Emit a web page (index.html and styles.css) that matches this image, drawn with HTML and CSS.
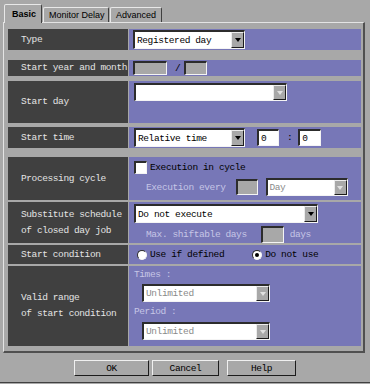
FILE: index.html
```html
<!DOCTYPE html>
<html lang="en">
<head>
  <meta charset="UTF-8" />
  <title>Schedule Definition</title>
  <link rel="stylesheet" href="styles.css">
</head>
<body>
  <div class="window">
    <div class="tabs">
      <div class="tab tab-basic active">Basic</div>
      <div class="tab tab-monitor">Monitor Delay</div>
      <div class="tab tab-advanced">Advanced</div>
    </div>

    <div class="panel">
      <div class="row row-type">
        <div class="label">Type</div>
        <div class="value pad">
          <div class="select w-type">
            <span class="select-text">Registered day</span>
            <span class="select-arrow"></span>
          </div>
        </div>
      </div>

      <div class="row row-year">
        <div class="label">Start year and month</div>
        <div class="value pad">
          <div class="field off w-year"></div>
          <span class="slash">/</span>
          <div class="field off w-month"></div>
        </div>
      </div>

      <div class="row row-day">
        <div class="label">Start day</div>
        <div class="value stack pad-day">
          <div class="select w-day">
            <span class="select-text"></span>
            <span class="select-arrow off"></span>
          </div>
        </div>
      </div>

      <div class="row row-time">
        <div class="label">Start time</div>
        <div class="value pad-day">
          <div class="select w-time">
            <span class="select-text">Relative time</span>
            <span class="select-arrow"></span>
          </div>
          <div class="field w-hour">0</div>
          <span class="colon">:</span>
          <div class="field w-min">0</div>
        </div>
      </div>

      <div class="row row-cycle">
        <div class="label">Processing cycle</div>
        <div class="value stack">
          <div class="line line-check">
            <span class="checkbox"></span>
            <span class="text">Execution in cycle</span>
          </div>
          <div class="line line-sub">
            <span class="text dim">Execution every</span>
            <div class="field off w-every"></div>
            <div class="select off w-unit">
              <span class="select-text">Day</span>
              <span class="select-arrow off"></span>
            </div>
          </div>
        </div>
      </div>

      <div class="row row-subst">
        <div class="label">Substitute schedule<br>of closed day job</div>
        <div class="value stack">
          <div class="select w-subst">
            <span class="select-text">Do not execute</span>
            <span class="select-arrow"></span>
          </div>
          <div class="line line-sub">
            <span class="text dim">Max. shiftable days</span>
            <div class="field off w-shift"></div>
            <span class="text dim days">days</span>
          </div>
        </div>
      </div>

      <div class="row row-cond">
        <div class="label">Start condition</div>
        <div class="value line-radio">
          <span class="radio"></span>
          <span class="text">Use if defined</span>
          <span class="radio checked second"></span>
          <span class="text">Do not use</span>
        </div>
      </div>

      <div class="row row-range">
        <div class="label">Valid range<br>of start condition</div>
        <div class="value stack range">
          <span class="text dim">Times :</span>
          <div class="select off w-range">
            <span class="select-text">Unlimited</span>
            <span class="select-arrow off"></span>
          </div>
          <span class="text dim period">Period :</span>
          <div class="select off w-range last">
            <span class="select-text">Unlimited</span>
            <span class="select-arrow off"></span>
          </div>
        </div>
      </div>
    </div>

    <div class="buttons">
      <button class="btn btn-ok">OK</button>
      <button class="btn btn-cancel">Cancel</button>
      <button class="btn btn-help">Help</button>
    </div>
  </div>
</body>
</html>
```

FILE: styles.css
```css
* {
  margin: 0;
  padding: 0;
  box-sizing: border-box;
}

body {
  background: #a8a8a8;
  font-family: 'Liberation Mono', monospace;
  font-size: 9.5px;
  letter-spacing: -0.4px;
  overflow: hidden;
}

.window {
  width: 370px;
  height: 383px;
  padding: 4px 0 0 3px;
  border-bottom: 1px solid #404040;
}

/* tabs */
.tabs {
  display: flex;
  align-items: flex-end;
  gap: 1px;
  height: 18px;
  padding-left: 1px;
}

.tab {
  height: 15px;
  display: flex;
  align-items: center;
  padding-left: 5px;
  font-family: 'Liberation Sans', Arial, sans-serif;
  font-size: 9px;
  letter-spacing: 0;
  white-space: nowrap;
  color: #000;
  border: 1px solid;
  border-bottom: none;
  border-color: #e8e8e8 #404040 transparent #e8e8e8;
  border-radius: 2px 2px 0 0;
}

.tab.active {
  position: relative;
  height: 19px;
  margin-bottom: -1px;
  padding-left: 7px;
  background: #a8a8a8;
  font-weight: bold;
}

.tab-basic { width: 38px; }
.tab-monitor { width: 66px; }
.tab-advanced { width: 52px; }

/* panel */
.panel {
  width: 362px;
  height: 331px;
  padding: 6px 0 0 4px;
  border-top: 1px solid #e4e4e4;
  border-left: 1px solid #e4e4e4;
  border-right: 2px solid #505050;
  border-bottom: 2px solid #505050;
}

.row {
  display: flex;
  gap: 1px;
  width: 353px;
  margin-top: 2px;
}

.row-type { height: 21px; margin-top: 0; }
.row-year { height: 16px; margin-top: 10px; }
.row-day { height: 42px; margin-top: 5px; }
.row-time { height: 21px; margin-top: 4px; }
.row-cycle { height: 43px; margin-top: 9px; }
.row-subst { height: 41px; }
.row-cond { height: 19px; }
.row-range { height: 80px; }

.label {
  width: 120px;
  flex-shrink: 0;
  display: flex;
  align-items: center;
  padding-left: 13px;
  background: #404040;
  color: #e4e4e4;
  line-height: 16px;
}

.value {
  flex: 1;
  display: flex;
  align-items: center;
  background: #7777b7;
  color: #000;
}

.value.stack {
  flex-direction: column;
  align-items: flex-start;
  padding-top: 2px;
  padding-left: 5px;
}

.pad { padding-left: 4px; }
.pad-day { padding-left: 5px; }

/* controls */
.select {
  display: flex;
  height: 19px;
  background: #fff;
  border-style: solid;
  border-width: 2px 1px 1px 2px;
  border-color: #2c2c2c #f4f4f4 #f4f4f4 #2c2c2c;
}

.select-text {
  flex: 1;
  display: flex;
  align-items: center;
  padding-left: 2px;
  white-space: nowrap;
  overflow: hidden;
}

.select.off .select-text {
  color: #8a8a8a;
}

.select-arrow {
  width: 13px;
  display: flex;
  align-items: center;
  justify-content: center;
  background: #a8a8a8;
  border: 1px solid;
  border-color: #ececec #1c1c1c #1c1c1c #ececec;
}

.select-arrow::after {
  content: '';
  border-left: 3px solid transparent;
  border-right: 3px solid transparent;
  border-top: 4px solid #000;
}

.select-arrow.off::after {
  border-top-color: #e0e0e0;
}

.field {
  display: flex;
  align-items: center;
  padding-left: 2px;
  background: #fff;
  border-style: solid;
  border-width: 2px 1px 1px 2px;
  border-color: #2c2c2c #f4f4f4 #f4f4f4 #2c2c2c;
}

.field.off { background: #a8a8a8; }

.w-type { width: 112px; }
.w-year { width: 34px; height: 14px; }
.w-month { width: 23px; height: 14px; }
.w-day { width: 153px; height: 18px; }
.w-time { width: 111px; }
.w-hour { width: 22px; height: 17px; margin-left: 12px; }
.w-min { width: 23px; height: 17px; margin-left: 6px; }
.w-every { width: 22px; height: 16px; margin-left: 10px; }
.w-unit { width: 82px; height: 18px; margin-left: 8px; }
.w-subst { width: 184px; }
.w-shift { width: 23px; height: 17px; margin-left: 14px; }
.w-range { width: 128px; height: 18px; margin-left: 8px; margin-top: 3px; }
.w-range.last { margin-top: 4px; }

.slash {
  margin: 0 4px 0 8px;
}

.colon {
  margin-left: 8px;
}

.line {
  display: flex;
  align-items: center;
}

.line-check {
  height: 15px;
  margin-top: 1px;
}

.line-sub {
  padding-left: 12px;
  margin-top: 3px;
}

.text {
  white-space: nowrap;
}

.dim {
  color: #c6c6e6;
}

.days {
  margin-left: 6px;
}

.checkbox {
  width: 13px;
  height: 13px;
  margin-right: 3px;
  background: #fff;
  border-style: solid;
  border-width: 2px 1px 1px 2px;
  border-color: #2c2c2c #f4f4f4 #f4f4f4 #2c2c2c;
}

.line-radio {
  padding-left: 8px;
}

.radio {
  width: 10px;
  height: 10px;
  margin-right: 3px;
  border-radius: 50%;
  background: #fff;
  border: 1px solid;
  border-color: #2c2c2c #f4f4f4 #f4f4f4 #2c2c2c;
  display: flex;
  align-items: center;
  justify-content: center;
}

.radio.second {
  margin-left: 28px;
}

.radio.checked::after {
  content: '';
  width: 4px;
  height: 4px;
  border-radius: 50%;
  background: #000;
}

.range {
  padding-left: 8px;
  padding-top: 5px;
}

.range .text {
  line-height: 13px;
}

.range .period {
  margin-top: 3px;
}

/* bottom buttons */
.buttons {
  display: flex;
  margin-top: 7px;
  padding-left: 71px;
}

.btn {
  height: 16px;
  font-family: 'Liberation Mono', monospace;
  font-size: 9.5px;
  letter-spacing: -0.4px;
  color: #000;
  background: #a8a8a8;
  border: 1px solid;
  border-color: #f0f0f0 #1c1c1c #1c1c1c #f0f0f0;
}

.btn-ok { width: 75px; }
.btn-cancel { width: 67px; margin-left: 3px; }
.btn-help { width: 69px; margin-left: 8px; }
```
